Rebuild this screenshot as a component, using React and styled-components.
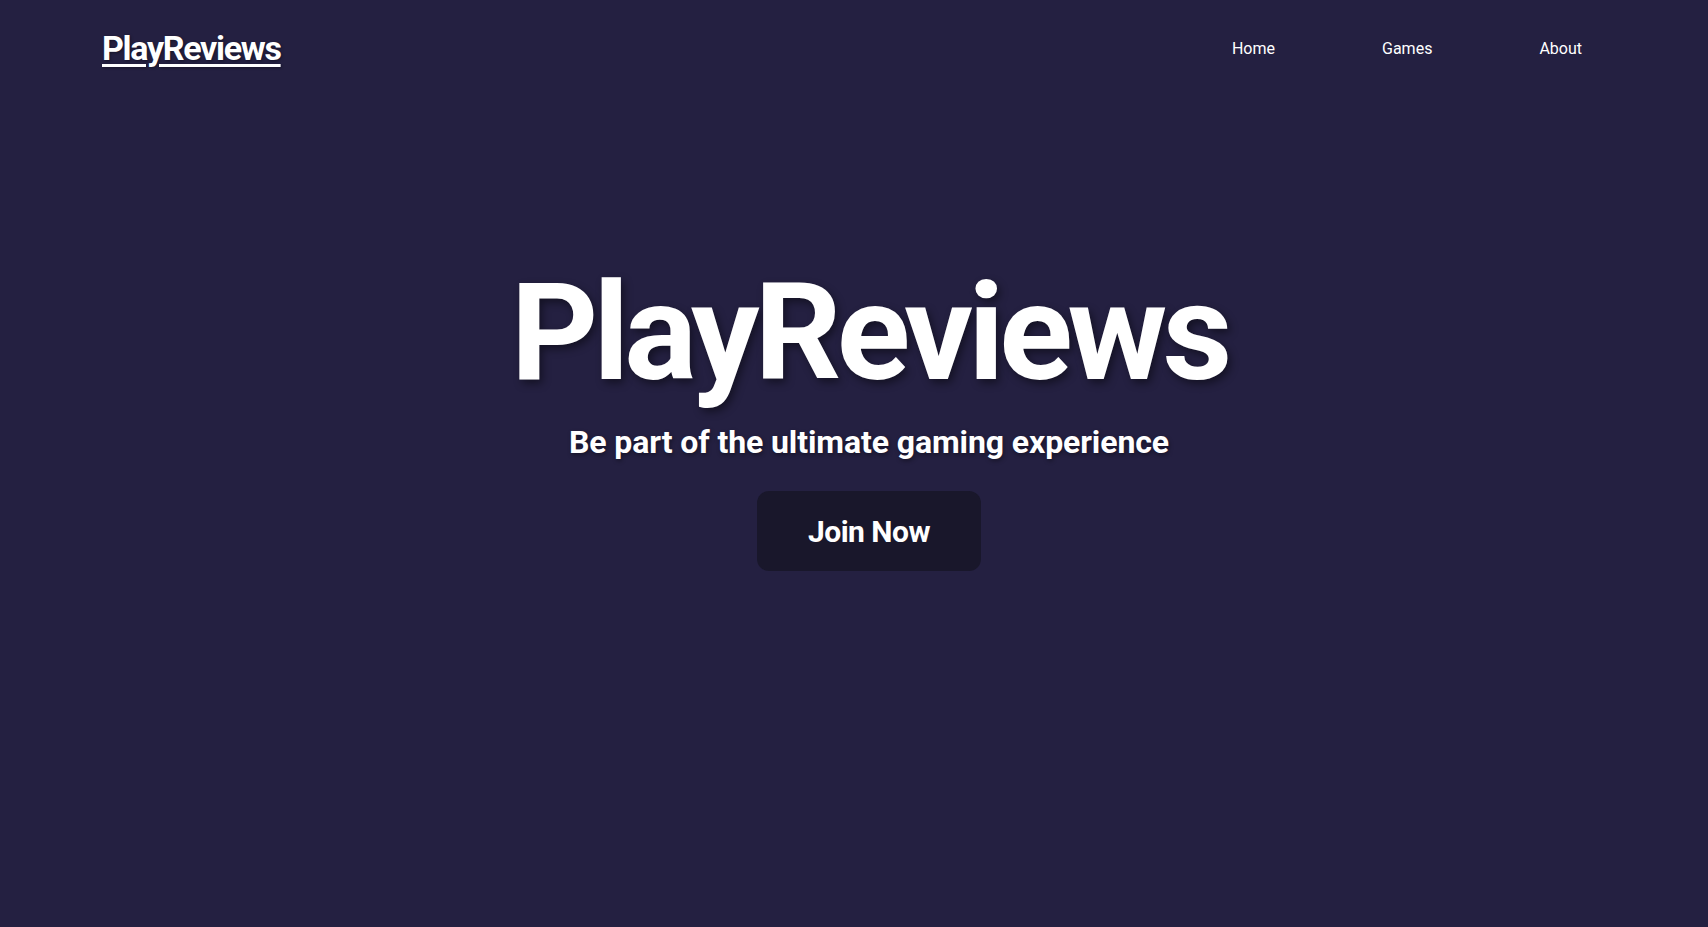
import styled, { createGlobalStyle } from "styled-components";

const GlobalStyle = createGlobalStyle`
  html, body {
    margin: 0;
    padding: 0;
    background-color: #242041;
    font-family: Roboto, "Liberation Sans", sans-serif;
    color: #ffffff;
  }
`;

const Page = styled.div`
  min-height: 100vh;
  background-color: #242041;
  display: flex;
  flex-direction: column;
`;

const Header = styled.header`
  display: flex;
  align-items: center;
  justify-content: space-between;
  height: 96px;
  padding: 0 126px 0 102px;
`;

const Logo = styled.a`
  font-size: 34px;
  font-weight: 700;
  color: #ffffff;
  text-decoration: underline;
  text-underline-offset: 4px;
  text-decoration-thickness: 3px;
  letter-spacing: -1.3px;
  text-shadow: 1px 1px 3px rgba(0, 0, 0, 0.4);
`;

const Nav = styled.nav`
  display: flex;
  gap: 107px;
`;

const NavLink = styled.a`
  font-size: 16px;
  color: #ffffff;
  text-decoration: none;
`;

const Hero = styled.main`
  display: flex;
  flex-direction: column;
  align-items: center;
  padding: 159px 0 0 30px;
`;

const Title = styled.h1`
  margin: 0;
  font-size: 136px;
  font-weight: 700;
  line-height: 156px;
  letter-spacing: -5px;
  text-shadow: 3px 4px 8px rgba(0, 0, 0, 0.45);
`;

const Subtitle = styled.p`
  margin: 12px 0 0;
  font-size: 32px;
  font-weight: 700;
  letter-spacing: -0.1px;
  text-shadow: 1px 2px 4px rgba(0, 0, 0, 0.4);
`;

const JoinButton = styled.button`
  margin-top: 30px;
  width: 224px;
  height: 80px;
  border: none;
  border-radius: 12px;
  background-color: #19172b;
  color: #ffffff;
  font-family: inherit;
  font-size: 30px;
  font-weight: 700;
  letter-spacing: -0.5px;
  cursor: pointer;
`;

export default function App() {
  return (
    <>
      <GlobalStyle />
      <Page>
        <Header>
          <Logo href="#">PlayReviews</Logo>
          <Nav>
            <NavLink href="#">Home</NavLink>
            <NavLink href="#">Games</NavLink>
            <NavLink href="#">About</NavLink>
          </Nav>
        </Header>
        <Hero>
          <Title>PlayReviews</Title>
          <Subtitle>Be part of the ultimate gaming experience</Subtitle>
          <JoinButton>Join Now</JoinButton>
        </Hero>
      </Page>
    </>
  );
}
